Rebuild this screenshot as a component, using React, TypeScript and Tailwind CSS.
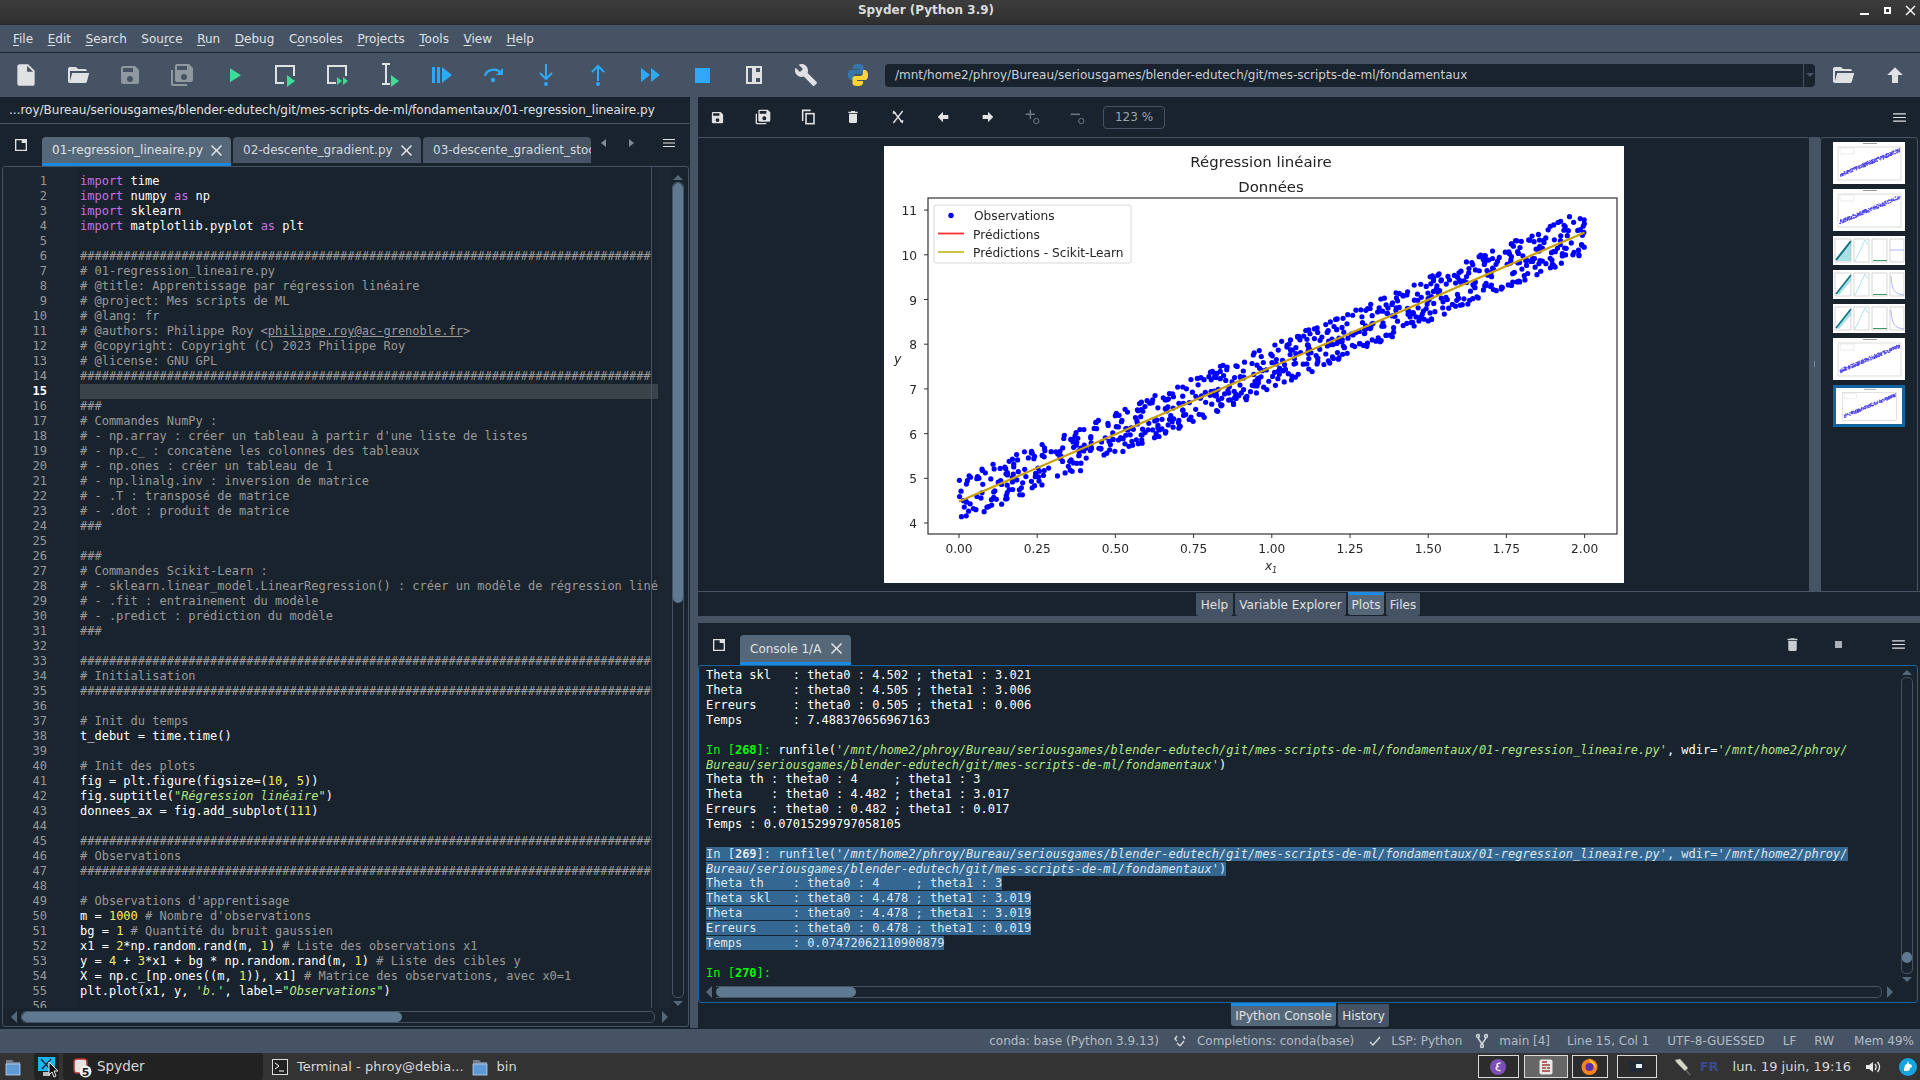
import React from 'react';

const HASHES = '#'.repeat(79);

const CODE: string[] = [
  'import time',
  'import numpy as np',
  'import sklearn',
  'import matplotlib.pyplot as plt',
  '',
  HASHES,
  '# 01-regression_lineaire.py',
  '# @title: Apprentissage par régression linéaire',
  '# @project: Mes scripts de ML',
  '# @lang: fr',
  '# @authors: Philippe Roy <philippe.roy@ac-grenoble.fr>',
  '# @copyright: Copyright (C) 2023 Philippe Roy',
  '# @license: GNU GPL',
  HASHES,
  '',
  '###',
  '# Commandes NumPy :',
  "# - np.array : créer un tableau à partir d'une liste de listes",
  '# - np.c_ : concatène les colonnes des tableaux',
  '# - np.ones : créer un tableau de 1',
  '# - np.linalg.inv : inversion de matrice',
  '# - .T : transposé de matrice',
  '# - .dot : produit de matrice',
  '###',
  '',
  '###',
  '# Commandes Scikit-Learn :',
  '# - sklearn.linear_model.LinearRegression() : créer un modèle de régression linéaire',
  '# - .fit : entrainement du modèle',
  '# - .predict : prédiction du modèle',
  '###',
  '',
  HASHES,
  '# Initialisation',
  HASHES,
  '',
  '# Init du temps',
  't_debut = time.time()',
  '',
  '# Init des plots',
  'fig = plt.figure(figsize=(10, 5))',
  'fig.suptitle("Régression linéaire")',
  'donnees_ax = fig.add_subplot(111)',
  '',
  HASHES,
  '# Observations',
  HASHES,
  '',
  "# Observations d'apprentisage",
  "m = 1000 # Nombre d'observations",
  'bg = 1 # Quantité du bruit gaussien',
  'x1 = 2*np.random.rand(m, 1) # Liste des observations x1',
  'y = 4 + 3*x1 + bg * np.random.rand(m, 1) # Liste des cibles y',
  'X = np.c_[np.ones((m, 1)), x1] # Matrice des observations, avec x0=1',
  "plt.plot(x1, y, 'b.', label=\"Observations\")",
  '',
];

const EMAIL = 'philippe.roy@ac-grenoble.fr';

function CodeLine({ text }: { text: string }) {
  const parts: React.ReactNode[] = [];
  const re = /(#.*$)|("[^"]*"|'[^']*')|\b(import|as)\b|\b(\d+)\b/g;
  let last = 0;
  let m: RegExpExecArray | null;
  while ((m = re.exec(text))) {
    if (m.index > last) parts.push(text.slice(last, m.index));
    if (m[1]) {
      const at = m[1].indexOf(EMAIL);
      parts.push(
        <span key={m.index} className="text-[#999999]">
          {at < 0 ? m[1] : (
            <>
              {m[1].slice(0, at)}
              <span className="underline">{EMAIL}</span>
              {m[1].slice(at + EMAIL.length)}
            </>
          )}
        </span>
      );
    } else if (m[2]) {
      parts.push(<span key={m.index} className="text-[#b0e686] italic">{m[2]}</span>);
    } else if (m[3]) {
      parts.push(<span key={m.index} className="text-[#c670e0]">{m[3]}</span>);
    } else {
      parts.push(<span key={m.index} className="text-[#faed5c]">{m[4]}</span>);
    }
    last = m.index + m[0].length;
  }
  if (last < text.length) parts.push(text.slice(last));
  return <>{parts}</>;
}

// material icons, drawn on a 24 box
const P = {
  file: 'M13,9V3.5L18.5,9M6,2C4.89,2 4,2.89 4,4V20A2,2 0 0,0 6,22H18A2,2 0 0,0 20,20V8L14,2H6Z',
  folder: 'M19,20H4C2.89,20 2,19.1 2,18V6C2,4.89 2.89,4 4,4H10L12,6H19A2,2 0 0,1 21,8H21L4,8V18L6.14,10H23.21L20.93,18.5C20.7,19.37 19.92,20 19,20Z',
  save: 'M15,9H5V5H15M12,19A3,3 0 0,1 9,16A3,3 0 0,1 12,13A3,3 0 0,1 15,16A3,3 0 0,1 12,19M17,3H5C3.89,3 3,3.9 3,5V19A2,2 0 0,0 5,21H19A2,2 0 0,0 21,19V7L17,3Z',
  saveAll: 'M17,7V3H7V7H17M14,17A3,3 0 0,0 17,14A3,3 0 0,0 14,11A3,3 0 0,0 11,14A3,3 0 0,0 14,17M19,1L23,5V17A2,2 0 0,1 21,19H7C5.89,19 5,18.1 5,17V3A2,2 0 0,1 7,1H19M1,7H3V21H17V23H3A2,2 0 0,1 1,21V7Z',
  play: 'M8,5.14V19.14L19,12.14L8,5.14Z',
  wrench: 'M22.7,19L13.6,9.9C14.5,7.6 14,4.9 12.1,3C10.1,1 7.1,0.6 4.7,1.7L9,6L6,9L1.6,4.7C0.4,7.1 0.9,10.1 2.9,12.1C4.8,14 7.5,14.5 9.8,13.6L18.9,22.7C19.3,23.1 19.9,23.1 20.3,22.7L22.6,20.4C23.1,20 23.1,19.3 22.7,19Z',
  up: 'M15,20H9V12H4.16L12,4.16L19.84,12H15V20Z',
  left: 'M20,9V15H12V19.84L4.16,12L12,4.16V9H20Z',
  right: 'M4,15V9H12V4.16L19.84,12L12,19.84V15H4Z',
  trash: 'M19,4H15.5L14.5,3H9.5L8.5,4H5V6H19M6,19A2,2 0 0,0 8,21H16A2,2 0 0,0 18,19V7H6V19Z',
  close: 'M19,6.41L17.59,5L12,10.59L6.41,5L5,6.41L10.59,12L5,17.59L6.41,19L12,13.41L17.59,19L19,17.59L13.41,12L19,6.41Z',
  menu: 'M3,6H21V7.6H3V6M3,11.2H21V12.8H3V11.2M3,16.4H21V18H3V16.4Z',
  undock: 'M3,3H21V21H3V3M5,9V19H19V9H13V5H5V9Z',
};

function Ico({ d, size = 24, color = '#e0e1e3' }: { d: string; size?: number; color?: string }) {
  return (
    <svg width={size} height={size} viewBox="0 0 24 24" fill={color} className="shrink-0">
      <path d={d} />
    </svg>
  );
}

const GREEN = '#3ddc97';
const BLUE = '#2ea8f8';

function RunBox({ mode }: { mode: 'cell' | 'next' | 'sel' }) {
  return (
    <svg width="26" height="26" viewBox="0 0 26 26" className="shrink-0">
      {mode === 'sel' ? (
        <path d="M5 2h8M5 22h8M9 2v20" stroke="#e0e1e3" strokeWidth="2" fill="none" />
      ) : (
        <path d="M11 21H3V4h18v10" stroke="#e0e1e3" strokeWidth="2" fill="none" />
      )}
      {mode === 'next' ? (
        <path d="M12 15l5 4-5 4zM18 15l5 4-5 4z" fill={GREEN} />
      ) : (
        <path d="M14 13l8 6-8 6z" fill={GREEN} />
      )}
    </svg>
  );
}

function MainToolbar() {
  const cell = 'w-[52px] h-full flex items-center justify-center shrink-0';
  return (
    <div className="h-[44px] flex items-center bg-[#455364] shrink-0">
      <div className={cell}><Ico d={P.file} size={26} /></div>
      <div className={cell}><Ico d={P.folder} size={24} /></div>
      <div className={cell}><Ico d={P.save} size={24} color="#8f979f" /></div>
      <div className={cell}><Ico d={P.saveAll} size={24} color="#8f979f" /></div>
      <div className={cell}><Ico d={P.play} size={24} color={GREEN} /></div>
      <div className={cell}><RunBox mode="cell" /></div>
      <div className={cell}><RunBox mode="next" /></div>
      <div className={cell}><RunBox mode="sel" /></div>
      <div className={cell}>
        <svg width="24" height="24" viewBox="0 0 24 24" fill={BLUE}><path d="M2 4h3v16H2zM7 4h3v16H7zM12 4l10 8-10 8z" /></svg>
      </div>
      <div className={cell}>
        <svg width="24" height="24" viewBox="0 0 24 24" fill="none" stroke={BLUE} strokeWidth="2.2">
          <path d="M3 13a9 8 0 0 1 16-3" /><path d="M21 5v7h-7z" fill={BLUE} stroke="none" /><circle cx="11" cy="17" r="2.2" fill={BLUE} stroke="none" />
        </svg>
      </div>
      <div className={cell}>
        <svg width="24" height="24" viewBox="0 0 24 24" fill="none" stroke={BLUE} strokeWidth="2">
          <path d="M12 1v15M6 10l6 6 6-6" /><circle cx="12" cy="21" r="2" fill={BLUE} stroke="none" />
        </svg>
      </div>
      <div className={cell}>
        <svg width="24" height="24" viewBox="0 0 24 24" fill="none" stroke={BLUE} strokeWidth="2">
          <path d="M12 18V3M6 9l6-6 6 6" /><circle cx="12" cy="21" r="2" fill={BLUE} stroke="none" />
        </svg>
      </div>
      <div className={cell}>
        <svg width="24" height="24" viewBox="0 0 24 24" fill={BLUE}><path d="M3 5l9 7-9 7zM13 5l9 7-9 7z" /></svg>
      </div>
      <div className={cell}><div className="w-[15px] h-[15px] bg-[#2ea8f8]" /></div>
      <div className={cell}>
        <svg width="24" height="24" viewBox="0 0 24 24" fill="#e0e1e3"><path fillRule="evenodd" d="M4 3h16v18H4zM6 5v14h4V5zM14 5v4h4V5zM14 15v4h4v-4z" /></svg>
      </div>
      <div className={cell}><Ico d={P.wrench} size={24} /></div>
      <div className={cell}>
        <svg width="22" height="24" viewBox="0 0 22 24">
          <path d="M11 1C7 1 6 2.500 6 4v2h6v1H4C1.500 7 1 9.500 1 12s1 5 3 5h2v-3c0-2 1.500-3 3-3h5c1.500 0 2.500-1 2.500-2.500V4C16.500 2 15 1 11 1z" fill="#3776ab" />
          <path d="M11 23c4 0 5-1.500 5-3v-2h-6v-1h8c2.500 0 3-2.500 3-5s-1-5-3-5h-2v3c0 2-1.500 3-3 3H8c-1.500 0-2.500 1-2.500 2.500V20c0 2 1.500 3 5.500 3z" fill="#ffd43b" />
        </svg>
      </div>
      <div className="ml-[1px] w-[930px] h-[23px] rounded-[4px] bg-[#19232d] flex items-center shrink-0">
        <span className="flex-1 pl-[10px] text-[12px] text-[#c9ced3] whitespace-pre">/mnt/home2/phroy/Bureau/seriousgames/blender-edutech/git/mes-scripts-de-ml/fondamentaux</span>
        <div className="w-[12px] h-full border-l border-[#455364] flex items-center justify-center">
          <div className="w-0 h-0 border-x-[4px] border-x-transparent border-t-[4px] border-t-[#455364]" />
        </div>
      </div>
      <div className="w-[2px] shrink-0" />
      <div className="w-[52px] flex justify-center shrink-0"><Ico d={P.folder} size={24} /></div>
      <div className="w-[51px] flex justify-center shrink-0"><Ico d={P.up} size={24} /></div>
    </div>
  );
}

const MENU: [string, string, string][] = [
  ['', 'F', 'ile'], ['', 'E', 'dit'], ['', 'S', 'earch'], ['Sou', 'r', 'ce'], ['', 'R', 'un'], ['', 'D', 'ebug'],
  ['C', 'o', 'nsoles'], ['', 'P', 'rojects'], ['', 'T', 'ools'], ['', 'V', 'iew'], ['', 'H', 'elp'],
];

function EditorTab({ label, active, width, cut }: { label: string; active?: boolean; width: string; cut?: boolean }) {
  return (
    <div className={`${width} h-[29px] mt-auto flex items-center rounded-t-[4px] overflow-hidden shrink-0 px-[10px] gap-[4px] text-[12px] whitespace-pre border-b-[3px] ${active ? 'bg-[#54687a] border-[#1a8ae0]' : 'bg-[#455364] border-[#19232d] text-[#d5d9dd]'}`}>
      <span>{label}</span>
      {!cut && <Ico d={P.close} size={19} />}
    </div>
  );
}

function EditorPane() {
  return (
    <div className="w-[690px] flex flex-col shrink-0 bg-[#19232d]">
      <div className="h-[27px] flex items-center pl-[9px] border-b border-[#455364] text-[12px] text-[#e0e1e3] whitespace-pre shrink-0">
        ...roy/Bureau/seriousgames/blender-edutech/git/mes-scripts-de-ml/fondamentaux/01-regression_lineaire.py
      </div>
      <div className="h-[42px] flex shrink-0">
        <div className="w-[42px] flex items-center justify-center"><Ico d={P.undock} size={16} /></div>
        <div className="flex gap-[2px] items-end">
          <EditorTab label="01-regression_lineaire.py" active width="w-[189px]" />
          <EditorTab label="02-descente_gradient.py" width="w-[188px]" />
          <EditorTab label="03-descente_gradient_stochastique.py" width="w-[168px]" cut />
        </div>
        <div className="flex-1 flex items-center text-[#8b96a1] pb-[4px]">
          <div className="w-0 h-0 ml-[10px] border-y-[4px] border-y-transparent border-r-[5px] border-r-[#7f8b97]" />
          <div className="w-0 h-0 ml-[23px] border-y-[4px] border-y-transparent border-l-[5px] border-l-[#7f8b97]" />
          <div className="ml-[27px]"><Ico d={P.menu} size={16} /></div>
        </div>
      </div>
      <div className="flex-1 min-h-0 mx-[2px] mr-[1px] mb-[1px] border border-[#455364] rounded-[3px] flex flex-col">
        <div className="flex-1 min-h-0 flex">
          <div className="w-[74px] pt-[7px] pr-[30px] shrink-0 overflow-hidden bg-[#1b2631] [font-family:'DejaVu_Sans_Mono',monospace] text-[12px] leading-[15px] text-right text-[#999999]">
            {CODE.map((_, i) => (
              <div key={i} className={i === 14 ? 'font-bold text-white' : ''}>{i + 1}</div>
            ))}
          </div>
          <div className="w-[581px] pt-[7px] pl-[3px] shrink-0 overflow-hidden relative [font-family:'DejaVu_Sans_Mono',monospace] text-[12px] leading-[15px] text-white">
            <div className="absolute left-[574px] top-0 bottom-0 w-px bg-[#455364]" />
            {CODE.map((line, i) => (
              <div key={i} className={`h-[15px] whitespace-pre overflow-hidden ${i === 14 ? 'bg-[#3a424a]' : ''} ${line === HASHES ? 'w-[572px]' : ''}`}>
                <CodeLine text={line} />
              </div>
            ))}
          </div>
          <div className="w-[13px] bg-[#1b2631] shrink-0" />
          <div className="w-[14px] shrink-0 flex flex-col items-center pt-[8px] pb-[2px]">
            <div className="w-0 h-0 border-x-[5px] border-x-transparent border-b-[5px] border-b-[#54687a]" />
            <div className="flex-1 w-[12px] mt-[2px] mb-[3px] border border-[#455364] rounded-[5px] flex flex-col">
              <div className="h-[420px] bg-[#5f7a90] rounded-[5px]" />
            </div>
            <div className="w-0 h-0 border-x-[5px] border-x-transparent border-t-[5px] border-t-[#54687a]" />
          </div>
        </div>
        <div className="h-[18px] shrink-0 flex items-center pl-[8px]">
          <div className="w-0 h-0 border-y-[6px] border-y-transparent border-r-[6px] border-r-[#54687a]" />
          <div className="ml-[4px] w-[634px] h-[12px] border border-[#455364] rounded-[5px]">
            <div className="w-[380px] h-full bg-[#5f7a90] rounded-[5px]" />
          </div>
          <div className="ml-[7px] w-0 h-0 border-y-[6px] border-y-transparent border-l-[6px] border-l-[#54687a]" />
        </div>
      </div>
    </div>
  );
}

function seeded(seed: number) {
  let s = seed;
  return () => {
    s = (s + 0x6d2b79f5) | 0;
    let t = Math.imul(s ^ (s >>> 15), 1 | s);
    t = (t + Math.imul(t ^ (t >>> 7), 61 | t)) ^ t;
    return ((t ^ (t >>> 14)) >>> 0) / 4294967296;
  };
}

const PX = (x: number) => 959 + 312.8 * x;
const PY = (y: number) => 523 - (y - 4) * 44.7;

const SCATTER = (() => {
  const rnd = seeded(269);
  const pts: [number, number][] = [];
  for (let i = 0; i < 800; i++) {
    const x = 2 * rnd();
    pts.push([PX(x), PY(4 + 3 * x + rnd())]);
  }
  return pts;
})();

function MainPlot() {
  const tick = "[font-family:'DejaVu_Sans',sans-serif] text-[12.2px] fill-[#262626]";
  return (
    <svg viewBox="884 146 740 437" className="w-[740px] h-[437px] shrink-0 bg-white [filter:blur(0.35px)]">
      <text x="1261" y="167" textAnchor="middle" className="[font-family:'DejaVu_Sans',sans-serif] text-[14.9px] fill-[#222]">Régression linéaire</text>
      <text x="1271" y="192" textAnchor="middle" className="[font-family:'DejaVu_Sans',sans-serif] text-[14.9px] fill-[#222]">Données</text>
      <rect x="928" y="198" width="689" height="336" fill="none" stroke="#333" strokeWidth="1.2" />
      {[4, 5, 6, 7, 8, 9, 10, 11].map((v) => (
        <g key={v}>
          <path d={`M924 ${PY(v)}h4`} stroke="#333" />
          <text x="917" y={PY(v) + 5} textAnchor="end" className={tick}>{v}</text>
        </g>
      ))}
      {[0, 0.25, 0.5, 0.75, 1, 1.25, 1.5, 1.75, 2].map((v) => (
        <g key={v}>
          <path d={`M${PX(v)} 534v4`} stroke="#333" />
          <text x={PX(v)} y="553" textAnchor="middle" className={tick}>{v.toFixed(2)}</text>
        </g>
      ))}
      <text x="894" y="363" className="[font-family:'DejaVu_Sans',sans-serif] text-[12.5px] italic fill-[#262626]">y</text>
      <text x="1265" y="570" className="[font-family:'DejaVu_Sans',sans-serif] text-[12px] italic fill-[#262626]">x<tspan dy="3" className="text-[8px]">1</tspan></text>
      <g fill="#0000ff">
        {SCATTER.map(([x, y], i) => <circle key={i} cx={x} cy={y} r="2.6" />)}
      </g>
      <path d={`M${PX(0)} ${PY(4.48)}L${PX(2)} ${PY(10.5)}`} stroke="#c8a000" strokeWidth="2.2" />
      <rect x="934" y="205" width="197" height="58" rx="2" fill="#fff" stroke="#d8d8d8" />
      <circle cx="951" cy="215.500" r="2.700" fill="#0000ff" />
      <path d="M938 233.500h26" stroke="#ff3030" strokeWidth="1.800" />
      <path d="M938 252h26" stroke="#c8c030" strokeWidth="1.800" />
      <text x="974" y="220" className={tick}>Observations</text>
      <text x="973" y="238.500" className={tick}>Prédictions</text>
      <text x="973" y="257" className={tick}>Prédictions - Scikit-Learn</text>
    </svg>
  );
}

function ThumbLine({ selected, seed }: { selected?: boolean; seed: number }) {
  const rnd = seeded(seed);
  const dots = Array.from({ length: 300 }, () => {
    const x = rnd();
    return [7 + 60 * x, 35 - 25 * x - 4 * rnd()];
  });
  return (
    <svg viewBox="0 0 72 42" className={`w-[72px] h-[42px] shrink-0 bg-white [filter:blur(0.2px)] ${selected ? 'border-[3px] border-[#1464a0]' : ''}`}>
      <rect x="5" y="5" width="63" height="33" fill="none" stroke="#aaa" strokeWidth="0.4" />
      <rect x="7" y="6" width="14" height="6" fill="none" stroke="#ccc" strokeWidth="0.4" />
      <rect x="30" y="1" width="14" height="1" fill="#999" />
      <g fill="#4a40e6">
        {dots.map(([x, y], i) => <circle key={i} cx={x} cy={y} r="0.6" />)}
      </g>
    </svg>
  );
}

function ThumbPanels({ flat }: { flat?: boolean }) {
  return (
    <svg viewBox="0 0 72 29" className="w-[72px] h-[29px] shrink-0 bg-white [filter:blur(0.25px)]">
      <path d={flat ? 'M3 25L18 4L18 25Z' : 'M3 24L18 5L18 11L6 25Z'} fill="#a8e0e4" />
      <path d="M3 24L18 5" stroke="#0f6f86" strokeWidth={flat ? 2 : 1.6} />
      <rect x="2" y="3" width="16" height="23" fill="none" stroke="#999" strokeWidth="0.4" />
      <rect x="21" y="3" width="15" height="23" fill="none" stroke="#999" strokeWidth="0.4" />
      <path d="M22 25L32 4L35 9" fill="none" stroke="#5fc6cf" strokeWidth="0.5" />
      <rect x="39" y="3" width="15" height="23" fill="none" stroke="#999" strokeWidth="0.4" />
      <path d="M40 24.500h14" stroke="#3d9a5f" strokeWidth="1" />
      <rect x="57" y="3" width="14" height="23" fill="none" stroke="#999" strokeWidth="0.4" />
      <path d={flat ? 'M57 14h14' : 'M58 6C59 20 61 24 71 25'} fill="none" stroke="#6a6af0" strokeWidth="0.5" />
    </svg>
  );
}

function ToolTab({ label, active, width }: { label: string; active?: boolean; width: string }) {
  return (
    <div className={`${width} h-[23px] flex items-center justify-center rounded-b-[3px] text-[12px] whitespace-pre shrink-0 ${active ? 'bg-[#54687a] border-t-[3px] border-[#1a8ae0]' : 'mt-[1px] h-[22px] bg-[#455364]'}`}>
      {label}
    </div>
  );
}

function PlotsPane() {
  const cell = 'w-[45px] flex justify-center shrink-0';
  return (
    <div className="h-[519px] flex flex-col shrink-0 bg-[#19232d]">
      <div className="h-[40px] flex items-center shrink-0 -ml-[3px]">
        <div className={cell}><Ico d={P.save} size={15} /></div>
        <div className={cell}><Ico d={P.saveAll} size={16} /></div>
        <div className={cell}>
          <svg width="16" height="16" viewBox="0 0 24 24" fill="none" stroke="#e0e1e3" strokeWidth="2.4"><path d="M16 2H4v16" /><rect x="9" y="7" width="12" height="15" /></svg>
        </div>
        <div className={cell}><Ico d={P.trash} size={16} /></div>
        <div className={cell}>
          <svg width="16" height="16" viewBox="0 0 24 24" fill="none" stroke="#e0e1e3" strokeWidth="2"><path d="M5 3l14 18M19 3L5 21M4 6h5M15 18h5" /></svg>
        </div>
        <div className={cell}><Ico d={P.left} size={16} /></div>
        <div className={cell}><Ico d={P.right} size={16} /></div>
        <div className={cell}>
          <svg width="16" height="16" viewBox="0 0 24 24" fill="none" stroke="#6d7883" strokeWidth="2.200"><path d="M8 1v14M1 8h14" /><circle cx="17" cy="18" r="4" strokeWidth="1.500" /></svg>
        </div>
        <div className={cell}>
          <svg width="16" height="16" viewBox="0 0 24 24" fill="none" stroke="#6d7883" strokeWidth="2.200"><path d="M1 8h14" /><circle cx="17" cy="18" r="4" strokeWidth="1.500" /></svg>
        </div>
        <div className="ml-[3px] w-[62px] h-[23px] border border-[#455364] rounded-[4px] flex items-center justify-center text-[12px] text-[#9aa4ad] shrink-0">123 %</div>
        <div className="ml-auto mr-[12px]"><Ico d={P.menu} size={17} /></div>
      </div>
      <div className="flex-1 min-h-0 flex">
        <div className="flex-1 border-t border-[#455364] rounded-tr-[3px] flex justify-center pt-[8px]">
          <MainPlot />
        </div>
        <div className="w-[11px] bg-[#455364] shrink-0 flex items-center justify-center">
          <div className="w-px h-[6px] bg-[#7f8b97]" />
        </div>
        <div className="w-[98px] border-t border-x border-[#455364] rounded-t-[4px] flex flex-col items-center pt-[4px] gap-[5px] shrink-0">
          <ThumbLine seed={3} />
          <ThumbLine seed={11} />
          <ThumbPanels flat />
          <ThumbPanels />
          <ThumbPanels />
          <ThumbLine seed={29} />
          <ThumbLine seed={41} selected />
        </div>
        <div className="w-[2px] bg-[#19232d] shrink-0" />
      </div>
      <div className="h-[25px] border-t border-[#455364] flex justify-end items-start gap-[2px] pr-[500px] shrink-0">
        <ToolTab label="Help" width="w-[37px]" />
        <ToolTab label="Variable Explorer" width="w-[111px]" />
        <ToolTab label="Plots" active width="w-[36px]" />
        <ToolTab label="Files" width="w-[34px]" />
      </div>
    </div>
  );
}

const PATH_A = "'/mnt/home2/phroy/Bureau/seriousgames/blender-edutech/git/mes-scripts-de-ml/fondamentaux/01-regression_lineaire.py'";
const PATH_B = "'/mnt/home2/phroy/";
const PATH_C = "Bureau/seriousgames/blender-edutech/git/mes-scripts-de-ml/fondamentaux'";

function Prompt({ n, dim }: { n: number; dim?: boolean }) {
  return (
    <span className={dim ? '' : 'text-[#00ff00]'}>In [<span className="font-bold">{n}</span>]:</span>
  );
}

function RunLines({ n, selected }: { n: number; selected?: boolean }) {
  const str = selected ? 'italic' : 'text-[#b0e686] italic';
  const bg = selected ? 'bg-[#346792] text-[#dfe6ec]' : '';
  return (
    <>
      <div className="h-[15px] whitespace-pre"><span className={bg}><Prompt n={n} dim={selected} /> runfile(<span className={str}>{PATH_A}</span>, wdir=<span className={str}>{PATH_B}</span></span></div>
      <div className="h-[14px] whitespace-pre"><span className={bg}><span className={str}>{PATH_C}</span>)</span></div>
    </>
  );
}

function Out({ text, selected }: { text: string; selected?: boolean }) {
  return (
    <div className="h-[15px] whitespace-pre">
      <span className={selected ? 'bg-[#346792] text-[#dfe6ec]' : ''}>{text}</span>
    </div>
  );
}

function ConsolePane() {
  return (
    <div className="flex-1 min-h-0 flex flex-col bg-[#19232d]">
      <div className="h-[42px] flex shrink-0">
        <div className="w-[42px] flex items-center justify-center pt-[2px]"><Ico d={P.undock} size={16} /></div>
        <div className="self-end w-[111px] h-[30px] flex items-center justify-between pl-[10px] pr-[5px] bg-[#54687a] border-b-[3px] border-[#1a8ae0] rounded-t-[4px] text-[12px] whitespace-pre">
          <span>Console 1/A</span>
          <Ico d={P.close} size={19} />
        </div>
        <div className="ml-auto flex items-center">
          <div className="w-[46px] flex justify-center"><Ico d={P.trash} size={17} color="#c9ced3" /></div>
          <div className="w-[46px] flex justify-center"><div className="w-[7px] h-[7px] bg-[#a9b0b7]" /></div>
          <div className="w-[59px] pl-[15px] flex justify-center"><Ico d={P.menu} size={17} /></div>
        </div>
      </div>
      <div className="h-[338px] mr-[2px] shrink-0 border border-[#1464a0] rounded-[3px] flex flex-col">
        <div className="flex-1 min-h-0 flex">
          <div className="flex-1 min-w-0 pt-[2px] pl-[7px] overflow-hidden [font-family:'DejaVu_Sans_Mono',monospace] text-[12px] leading-[15px] text-white">
            <Out text="Theta skl   : theta0 : 4.502 ; theta1 : 3.021" />
            <Out text="Theta       : theta0 : 4.505 ; theta1 : 3.006" />
            <Out text="Erreurs     : theta0 : 0.505 ; theta1 : 0.006" />
            <Out text="Temps       : 7.488370656967163" />
            <Out text=" " />
            <RunLines n={268} />
            <Out text="Theta th : theta0 : 4     ; theta1 : 3" />
            <Out text="Theta    : theta0 : 4.482 ; theta1 : 3.017" />
            <Out text="Erreurs  : theta0 : 0.482 ; theta1 : 0.017" />
            <Out text="Temps : 0.07015299797058105" />
            <Out text=" " />
            <RunLines n={269} selected />
            <Out selected text="Theta th    : theta0 : 4     ; theta1 : 3" />
            <Out selected text="Theta skl   : theta0 : 4.478 ; theta1 : 3.019" />
            <Out selected text="Theta       : theta0 : 4.478 ; theta1 : 3.019" />
            <Out selected text="Erreurs     : theta0 : 0.478 ; theta1 : 0.019" />
            <Out selected text="Temps       : 0.07472062110900879" />
            <Out text=" " />
            <div className="h-[15px]"><Prompt n={270} /></div>
          </div>
          <div className="w-[16px] mr-[2px] shrink-0 flex flex-col items-center pt-[4px]">
            <div className="w-0 h-0 border-x-[5px] border-x-transparent border-b-[5px] border-b-[#54687a]" />
            <div className="w-[12px] h-[297px] mt-[2px] border border-[#455364] rounded-[5px] flex flex-col justify-end pb-[10px]">
              <div className="h-[11px] rounded-full bg-[#5f7a90]" />
            </div>
            <div className="mt-[3px] w-0 h-0 border-x-[5px] border-x-transparent border-t-[5px] border-t-[#54687a]" />
          </div>
        </div>
        <div className="h-[16px] shrink-0 flex items-start pl-[7px]">
          <div className="w-0 h-0 border-y-[6px] border-y-transparent border-r-[6px] border-r-[#54687a]" />
          <div className="ml-[4px] w-[1166px] h-[12px] border-y border-r border-[#455364] rounded-r-[5px]">
            <div className="w-[140px] h-full bg-[#5f7a90] rounded-[5px]" />
          </div>
          <div className="ml-[5px] w-0 h-0 border-y-[6px] border-y-transparent border-l-[6px] border-l-[#54687a]" />
        </div>
      </div>
      <div className="flex-1 flex justify-end items-start gap-[2px] pr-[531px]">
        <ToolTab label="IPython Console" active width="w-[105px]" />
        <ToolTab label="History" width="w-[51px]" />
      </div>
    </div>
  );
}

function StatusBar() {
  return (
    <div className="h-[25px] border-t border-[#19232d] bg-[#455364] shrink-0 flex items-center justify-end pr-[6px] text-[12px] text-[#b4bcc4] whitespace-pre">
      <span>conda: base (Python 3.9.13)</span>
      <svg width="16" height="16" viewBox="0 0 16 16" fill="none" stroke="#d5d9dd" strokeWidth="1.400" className="ml-[13px]">
        <path d="M5 3L3 6l2 2M11 3l2 3M8 13l-3-3M8 13l4-5" />
      </svg>
      <span className="ml-[9px]">Completions: conda(base)</span>
      <svg width="14" height="14" viewBox="0 0 14 14" fill="none" stroke="#d5d9dd" strokeWidth="1.400" className="ml-[14px]"><path d="M2 8l3 3 7-8" /></svg>
      <span className="ml-[9px]">LSP: Python</span>
      <svg width="14" height="16" viewBox="0 0 14 16" fill="none" stroke="#d5d9dd" strokeWidth="1.400" className="ml-[13px]">
        <circle cx="3" cy="3" r="1.500" /><circle cx="11" cy="3" r="1.500" /><circle cx="7" cy="13" r="1.500" /><path d="M3 5l4 6M11 5l-4 6" />
      </svg>
      <span className="ml-[10px]">main [4]</span>
      <span className="ml-[17px]">Line 15, Col 1</span>
      <span className="ml-[18px]">UTF-8-GUESSED</span>
      <span className="ml-[18px]">LF</span>
      <span className="ml-[18px]">RW</span>
      <span className="ml-[20px]">Mem 49%</span>
    </div>
  );
}

function FolderIcon({ className }: { className?: string }) {
  return (
    <svg width="16" height="18" viewBox="0 0 16 18" className={className}>
      <path d="M1 2h6l2 2h6v13H1z" fill="#6f7f8f" />
      <rect x="1" y="6" width="14" height="11" fill="#5e9ad6" stroke="#cfe2f5" strokeWidth="0.700" />
    </svg>
  );
}

function TrayBox({ width, active, children }: { width: string; active?: boolean; children: React.ReactNode }) {
  return (
    <div className={`${width} h-[23px] border border-[#d8d8d8] flex items-center justify-center shrink-0 ${active ? 'bg-[#666666]' : 'bg-[#2c2c2c]'}`}>
      {children}
    </div>
  );
}

function Taskbar() {
  return (
    <div className="flex-1 min-h-0 bg-[#333333] flex items-center text-[13px] text-[#d8d8d8] whitespace-pre">
      <FolderIcon className="ml-[5px] shrink-0" />
      <div className="ml-[13px] w-[25px] h-full bg-[#222] flex items-center justify-center rounded-[3px] relative shrink-0">
        <svg width="17" height="20" viewBox="0 0 17 20">
          <rect width="17" height="14" fill="#17b8f0" />
          <path d="M3 2l9 10M13 2L4 12" stroke="#123" strokeWidth="1.200" />
          <rect x="5" y="15" width="7" height="4" fill="#bbb" />
        </svg>
        <svg width="12" height="18" viewBox="0 0 12 18" className="absolute left-[14px] top-[8px]">
          <path d="M1 1v13l3-3 2 5 2-1-2-5h4z" fill="#111" stroke="#eee" strokeWidth="1" />
        </svg>
      </div>
      <div className="ml-[4px] w-[200px] h-full bg-[#222] rounded-[3px] flex items-center pl-[10px] shrink-0">
        <svg width="19" height="22" viewBox="0 0 19 22" className="shrink-0">
          <rect x="1" y="3" width="13" height="14" rx="3" fill="#e5e5e5" stroke="#b33" strokeWidth="1.500" />
          <circle cx="12.500" cy="15.500" r="6" fill="#f2f2f2" />
          <text x="12.500" y="19.500" textAnchor="middle" className="[font-family:'DejaVu_Sans',sans-serif] text-[11px] font-bold fill-[#222]">5</text>
        </svg>
        <span className="ml-[5px] text-[13.500px]">Spyder</span>
      </div>
      <svg width="16" height="18" viewBox="0 0 16 18" className="ml-[9px] shrink-0">
        <rect x="0.500" y="1.500" width="15" height="15" fill="#222" stroke="#dcdcdc" />
        <path d="M3 5l4 3-4 3M7 13h5" stroke="#fff" fill="none" />
      </svg>
      <span className="ml-[9px]">Terminal - phroy@debia...</span>
      <FolderIcon className="ml-[8px] shrink-0" />
      <span className="ml-[9px]">bin</span>
      <div className="flex-1" />
      <TrayBox width="w-[41px]">
        <svg width="16" height="16" viewBox="0 0 16 16"><circle cx="8" cy="8" r="8" fill="#7b4fb5" /><path d="M10.500 4C7 4 6 6 8 7.500 5 8 5.500 12 10.500 11.500" stroke="#fff" strokeWidth="1.400" fill="none" /></svg>
      </TrayBox>
      <div className="ml-[5px]" />
      <TrayBox width="w-[44px]" active>
        <svg width="14" height="16" viewBox="0 0 14 16"><rect x="0.500" y="0.500" width="13" height="15" rx="2" fill="#e8e8e8" /><path d="M3 3h5M3 6h8M3 9h4M8 9h3M3 12h8" stroke="#a33" strokeWidth="1.300" /></svg>
      </TrayBox>
      <div className="ml-[4px]" />
      <TrayBox width="w-[36px]">
        <svg width="17" height="17" viewBox="0 0 17 17"><circle cx="8.500" cy="9" r="8" fill="#f58220" /><path d="M8.500 0C10 3 16 5 15 11 13 6 10 6 8.500 3z" fill="#ffcb2d" /><circle cx="8.500" cy="9" r="4" fill="#5b2fb3" /></svg>
      </TrayBox>
      <div className="ml-[9px]" />
      <TrayBox width="w-[40px]">
        <svg width="15" height="10" viewBox="0 0 15 10"><rect width="15" height="10" fill="#1f2a36" /><rect x="7" y="2" width="6" height="4" fill="#e8eef5" /></svg>
      </TrayBox>
      <svg width="20" height="20" viewBox="0 0 20 20" className="ml-[16px] shrink-0">
        <path d="M2 3l5-1 8 9-3 3-8-8z" fill="#d7d7c8" stroke="#888" strokeWidth="0.500" /><path d="M13 13l4 5" stroke="#666" strokeWidth="1.500" />
      </svg>
      <span className="ml-[7px] text-[#3c4a8e] font-bold">FR</span>
      <span className="ml-[14px]">lun. 19 juin, 19:16</span>
      <svg width="18" height="18" viewBox="0 0 18 18" fill="none" stroke="#e8e8e8" strokeWidth="1.300" className="ml-[13px] shrink-0">
        <path d="M2 7h3l4-3v10l-4-3H2z" fill="#e8e8e8" stroke="none" /><path d="M11 6c1.500 2 1.500 4 0 6M13.500 4c2.500 3 2.500 7 0 10" />
      </svg>
      <svg width="18" height="18" viewBox="0 0 18 18" className="ml-[17px] mr-[3px] shrink-0">
        <circle cx="9" cy="9" r="9" fill="#14a5e0" /><path d="M5 13c0-4 1-7 3-7l1-3 1 3c2 0 3 1 3 3l-2 1c0 2-1 3-3 3z" fill="#fff" />
      </svg>
    </div>
  );
}

export default function App() {
  return (
    <div className="w-[1920px] h-[1080px] overflow-hidden flex flex-col bg-[#455364] text-[#e0e1e3] [font-family:'DejaVu_Sans',sans-serif]">
      <div className="h-[25px] shrink-0 bg-gradient-to-b from-[#3d3d3d] to-[#2f2f2f] border-b border-[#22282e] relative flex items-center justify-center pb-[4px] pr-[68px] text-[12px] font-bold text-[#dcdcdc]">
        Spyder (Python 3.9)
        <div className="absolute right-[2px] top-0 h-[24px] flex items-center gap-[8px] pb-[3px]">
          <div className="w-[15px] flex justify-center"><div className="w-[9px] h-[2px] mt-[7px] bg-white" /></div>
          <div className="w-[15px] flex justify-center"><div className="w-[7px] h-[7px] border-2 border-white" /></div>
          <div className="w-[15px] flex justify-center"><Ico d={P.close} size={17} color="#ffffff" /></div>
        </div>
      </div>
      <div className="h-[28px] shrink-0 border-b border-[#19232d] flex items-center pl-[13px] gap-[14.6px] text-[12px]">
        {MENU.map(([a, b, c]) => (
          <span key={a + b + c} className="whitespace-pre">{a}<span className="underline underline-offset-2">{b}</span>{c}</span>
        ))}
      </div>
      <MainToolbar />
      <div className="h-[931px] shrink-0 flex gap-[8px]">
        <EditorPane />
        <div className="flex-1 min-w-0 flex flex-col gap-[7px]">
          <PlotsPane />
          <ConsolePane />
        </div>
      </div>
      <StatusBar />
      <Taskbar />
    </div>
  );
}
